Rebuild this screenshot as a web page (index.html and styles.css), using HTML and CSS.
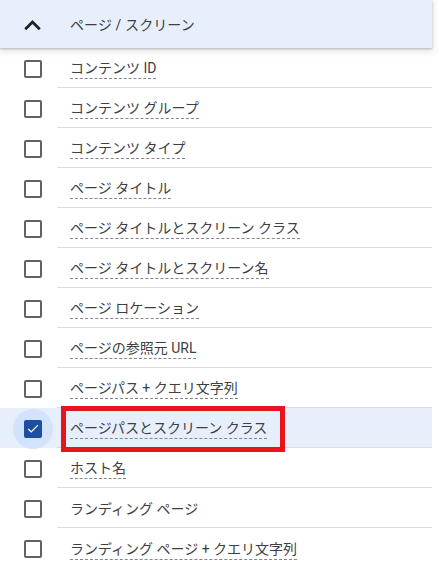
FILE: index.html
```html
<!DOCTYPE html>
<html lang="ja">
<head>
<meta charset="utf-8">
<link rel="stylesheet" href="styles.css">
</head>
<body>
<div class="panel">
  <div class="header">
    <div class="icon-cell">
      <svg class="chevron" viewBox="0 0 24 24" width="33" height="33"><path d="M12 8l-6 6 1.41 1.41L12 10.83l4.59 4.58L18 14z" fill="#202124"/></svg>
    </div>
    <div class="header-title">ページ / スクリーン</div>
  </div>
  <ul class="list">
    <li class="row"><div class="check-cell"><span class="box"></span></div><div class="label-cell"><span class="label">コンテンツ ID</span></div></li>
    <li class="row"><div class="check-cell"><span class="box"></span></div><div class="label-cell"><span class="label">コンテンツ グループ</span></div></li>
    <li class="row"><div class="check-cell"><span class="box"></span></div><div class="label-cell"><span class="label">コンテンツ タイプ</span></div></li>
    <li class="row"><div class="check-cell"><span class="box"></span></div><div class="label-cell"><span class="label">ページ タイトル</span></div></li>
    <li class="row"><div class="check-cell"><span class="box"></span></div><div class="label-cell"><span class="label">ページ タイトルとスクリーン クラス</span></div></li>
    <li class="row"><div class="check-cell"><span class="box"></span></div><div class="label-cell"><span class="label">ページ タイトルとスクリーン名</span></div></li>
    <li class="row"><div class="check-cell"><span class="box"></span></div><div class="label-cell"><span class="label">ページ ロケーション</span></div></li>
    <li class="row"><div class="check-cell"><span class="box"></span></div><div class="label-cell"><span class="label">ページの参照元 URL</span></div></li>
    <li class="row"><div class="check-cell"><span class="box"></span></div><div class="label-cell"><span class="label">ページパス + クエリ文字列</span></div></li>
    <li class="row selected"><div class="check-cell"><span class="halo"><span class="box checked"><svg viewBox="0 0 24 24" width="18" height="18"><path d="M9 16.17L4.83 12l-1.42 1.41L9 19 21 7l-1.41-1.41z" fill="#fff" transform="translate(2.4 1.8) scale(0.8)"/></svg></span></span></div><div class="label-cell"><span class="label">ページパスとスクリーン クラス</span></div><div class="highlight"></div></li>
    <li class="row"><div class="check-cell"><span class="box"></span></div><div class="label-cell"><span class="label">ホスト名</span></div></li>
    <li class="row"><div class="check-cell"><span class="box"></span></div><div class="label-cell"><span class="plain">ランディング ページ</span></div></li>
    <li class="row last"><div class="check-cell"><span class="box"></span></div><div class="label-cell"><span class="label">ランディング ページ + クエリ文字列</span></div></li>
  </ul>
</div>
</body>
</html>
```

FILE: styles.css
```css
* { box-sizing: border-box; }
html, body { margin: 0; padding: 0; background: #fff; }
body {
  font-family: Roboto, "Noto Sans CJK JP", sans-serif;
  font-size: 14px;
  color: #3c4043;
}
.panel { width: 432px; }
.header {
  position: relative;
  z-index: 2;
  display: flex;
  align-items: center;
  height: 48px;
  background: #e8effc;
  box-shadow: 0 1px 2px rgba(60,64,67,.3), 0 2px 6px 2px rgba(60,64,67,.12);
}
.icon-cell {
  width: 70px;
  height: 48px;
  display: flex;
  align-items: center;
  padding-left: 16px;
}
.chevron { display: block; margin-top: 2px; }
.header-title { letter-spacing: 0.1px; }
.list { list-style: none; margin: 0; padding: 0; }
.row {
  position: relative;
  display: flex;
  height: 40px;
}
.row.selected { background: #e8effc; }
.check-cell {
  width: 57px;
  display: flex;
  align-items: center;
  padding-left: 24px;
}
.box {
  display: block;
  width: 18px;
  height: 18px;
  border: 2px solid #5f6368;
  border-radius: 2px;
  margin-top: 2px;
}
.halo {
  display: flex;
  align-items: center;
  justify-content: center;
  width: 40px;
  height: 40px;
  margin-left: -11px;
  border-radius: 50%;
  background: #d3e3fd;
  margin-top: 2px;
}
.halo .box { margin-top: 0; }
.box.checked {
  background: #1c4ea3;
  border-color: #1c4ea3;
  position: relative;
}
.box.checked svg { position: absolute; left: -2px; top: -2px; }
.label-cell {
  flex: 1;
  display: flex;
  align-items: center;
  padding-left: 13px;
  border-bottom: 1px solid #dadce0;
}
.row.last .label-cell { border-bottom: none; }
.label {
  border-bottom: 1px dashed #80868b;
  line-height: 20px;
  margin-top: 2px;
}
.plain { line-height: 20px; margin-top: 2px; }
.highlight {
  position: absolute;
  left: 61px;
  top: -2px;
  width: 224px;
  height: 46px;
  border: 5px solid #e8141c;
}
```
